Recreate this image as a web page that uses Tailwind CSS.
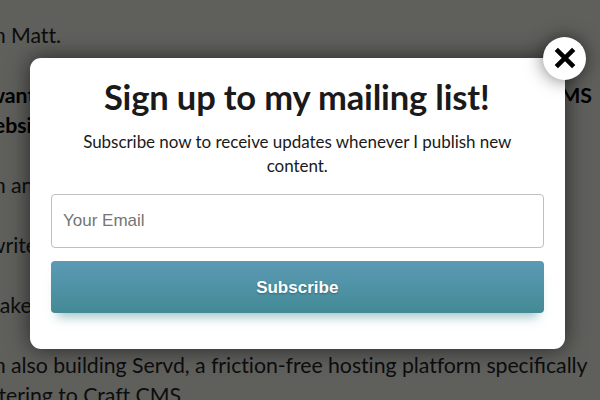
<!DOCTYPE html>
<html lang="en">
<head>
<meta charset="utf-8">
<title>Mailing list</title>
<script src="https://cdn.jsdelivr.net/npm/@tailwindcss/browser@4"></script>
</head>
<body class="relative h-[400px] w-[600px] overflow-hidden bg-[#5f5f5c] font-[Lato,sans-serif]">
<main class="-ml-[22px] flex w-[614px] flex-col gap-[30px] pt-[19.5px] text-[21.3px] leading-[30px] tracking-[-0.055px] whitespace-nowrap text-[#0d0d0d]">
  <p>I'm Matt.</p>
  <div class="font-bold text-black">
    <p class="flex justify-between"><span class="-ml-px">I want</span><span>CMS</span></p>
    <p class="-ml-px">website</p>
  </div>
  <p>I'm an</p>
  <p>I write</p>
  <p class="-ml-[7px]">I make</p>
  <div>
    <p>I'm also building Servd, a friction-free hosting platform speci<span class="tracking-normal">fi</span>cally</p>
    <p>catering to Craft CMS.</p>
  </div>
</main>
<section role="dialog" class="absolute top-[57.5px] left-[29.5px] h-[291px] w-[535.5px] rounded-[11px] bg-white px-[21.5px] pt-[17.5px] text-center text-[#1a1a1a] shadow-[0_0_22px_rgba(0,0,0,0.6)]">
  <h1 class="-ml-px text-[34.5px] leading-[43px] font-bold tracking-[-0.15px] whitespace-nowrap">Sign up to my mailing list!</h1>
  <p class="mt-3 text-[17px] leading-6 tracking-[-0.04px]">Subscribe now to receive updates whenever I publish new<br>content.</p>
  <input type="email" placeholder="Your Email" class="mt-4 block h-[54px] w-full rounded-[4px] border border-[#bfbfbf] px-[11px] font-['Liberation_Sans',sans-serif] text-[17px] placeholder:text-[#757575]">
  <button class="mt-[13px] block h-[52px] w-full rounded-[4px] bg-linear-to-b from-[#5b9ab5] to-[#438a95] pt-px font-['Liberation_Sans',sans-serif] text-[17px] font-bold text-white shadow-[0_10px_10px_-6px_rgba(67,138,149,0.5)] text-shadow-[0_1px_2px_rgba(0,0,0,0.3)]">Subscribe</button>
  <button aria-label="Close" class="absolute -top-[21px] -right-[21px] flex size-[43px] items-center justify-center rounded-full bg-white shadow-[0_0_18px_rgba(0,0,0,0.55)]">
    <svg class="size-[22px]" viewBox="0 0 22 22" fill="none" stroke="#000" stroke-width="4.6"><path d="M2.3 2.3 19.7 19.7M19.7 2.3 2.3 19.7"/></svg>
  </button>
</section>
</body>
</html>
